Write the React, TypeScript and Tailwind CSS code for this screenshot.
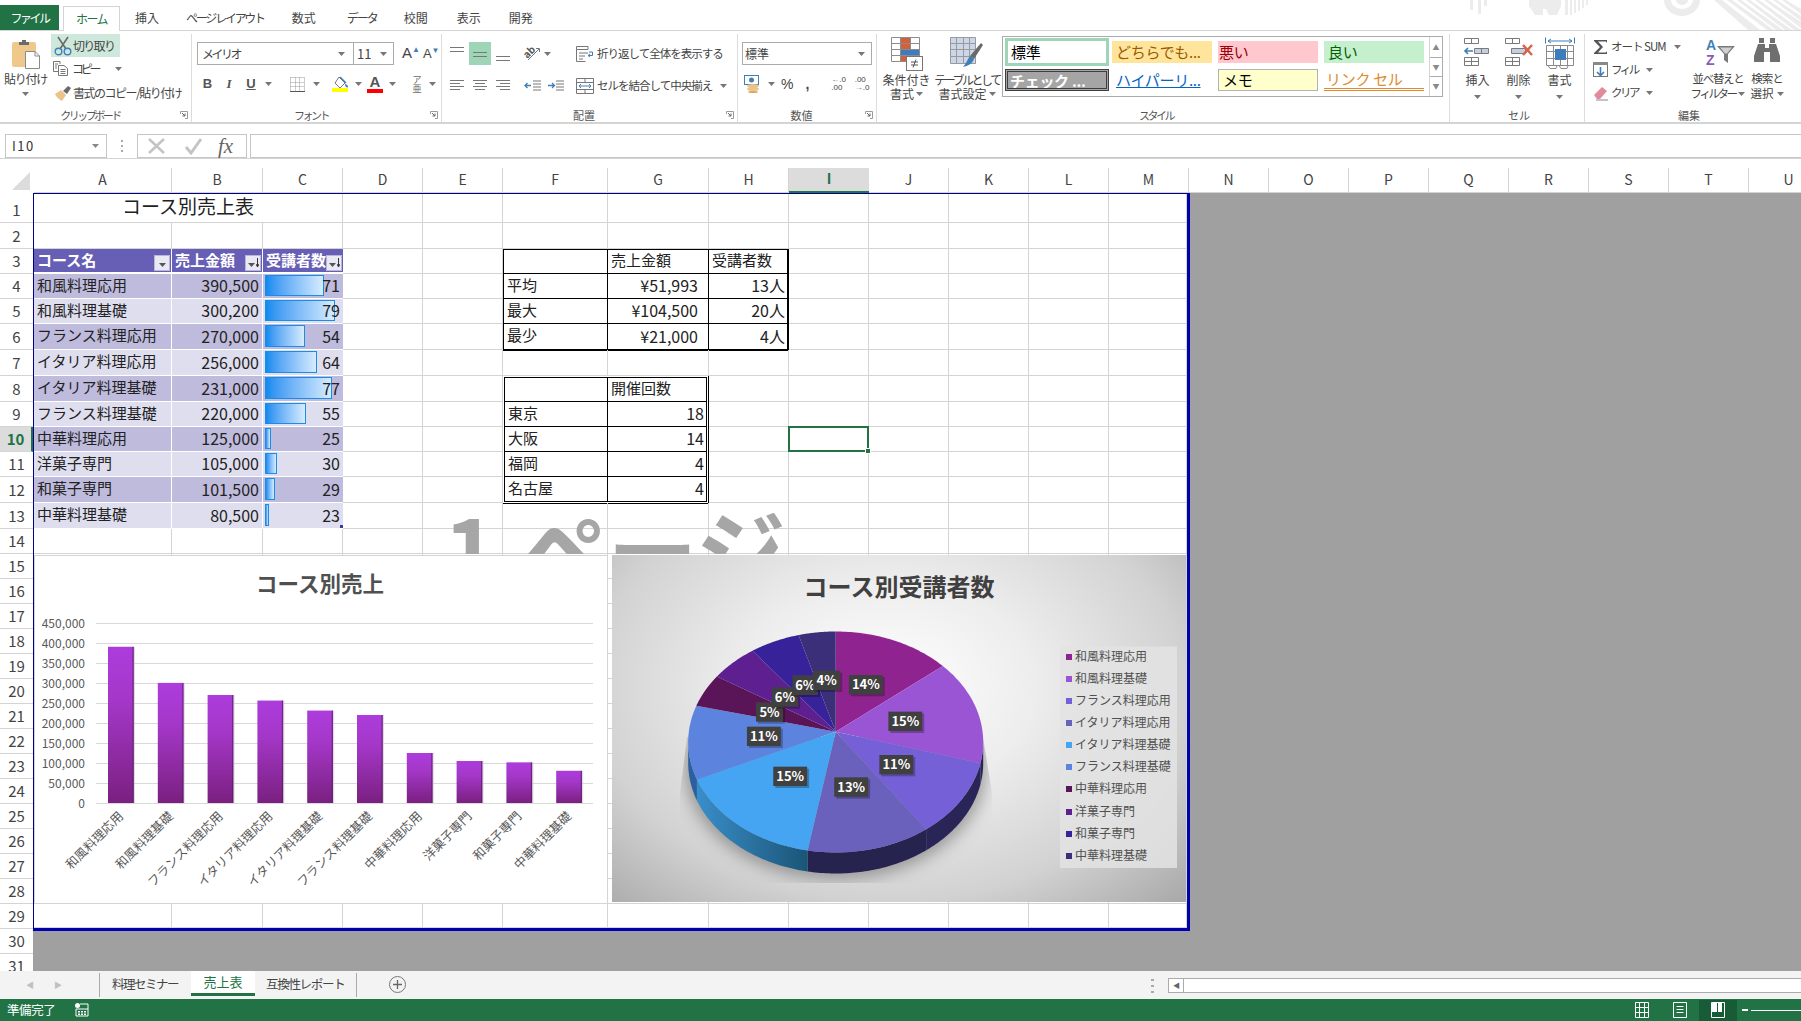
import React from 'react';

const Chev = ({ c = '#777' }: { c?: string }) => (
  <svg width="7" height="4" viewBox="0 0 7 4" className="shrink-0"><path d="M0 0h7L3.5 4z" fill={c} /></svg>
);
const Launcher = () => (
  <svg width="8" height="8" viewBox="0 0 8 8" className="shrink-0 mr-[3px]"><path d="M.5 3V.5H7.5V7.5H5" fill="none" stroke="#9a9a9a" /><path d="M2 2l3 3M5 2.5V5H2.5" fill="none" stroke="#666" /></svg>
);
const Sep = () => <div className="w-px self-stretch bg-[#dcdcdc] shrink-0" />;

const Lines = ({ rows }: { rows: [number, number, number][] }) => (
  <svg width="18" height="16" viewBox="0 0 18 16">
    {rows.map(([y, a, b], i) => <path key={i} d={`M${a} ${y + 0.5}H${b}`} stroke="#777" />)}
  </svg>
);

const Group = ({ w, label, launcher, children }: { w: string; label: React.ReactNode; launcher?: boolean; children: React.ReactNode }) => (
  <div className={`${w} h-[88px] flex flex-col border-r border-[#dcdcdc] shrink-0`}>
    <div className="h-[74px]">{children}</div>
    <div className="h-[14px] flex items-center">
      <div className="flex-1 text-center text-[11px] leading-none text-[#555]">{label}</div>
      {launcher ? <Launcher /> : <div className="w-[14px]" />}
    </div>
  </div>
);

const Paste = () => (
  <svg width="30" height="30" viewBox="0 0 30 30">
    <rect x="1" y="3" width="24" height="25" rx="2" fill="#efc98c" />
    <path d="M8 6V3h3V1h4v2h3v3z" fill="#6b6b6b" />
    <path d="M14.5 12.5H24l4.5 4.5V29.500H14.500z" fill="#fff" stroke="#8a8a8a" />
    <path d="M24 12.500V17h4.500" fill="none" stroke="#8a8a8a" />
  </svg>
);
const Scissors = () => (
  <svg width="18" height="20" viewBox="0 0 18 20">
    <path d="M4 1l8 12M14 1L6 13" stroke="#6a6a6a" strokeWidth="1.600" fill="none" />
    <circle cx="4.500" cy="15.500" r="3.300" fill="none" stroke="#3f7fb8" strokeWidth="1.400" />
    <circle cx="13.500" cy="15.500" r="3.300" fill="none" stroke="#3f7fb8" strokeWidth="1.400" />
  </svg>
);
const CopyIc = () => (
  <svg width="16" height="15" viewBox="0 0 16 15" fill="none" stroke="#777">
    <path d="M.5.500H7V3M.5.500V10.500H5" />
    <path d="M5.500 4.500H11l3.500 3v7H5.500z" fill="#fff" />
    <path d="M7.500 8.500h5M7.500 10.500h5M7.500 12.500h5" />
    <path d="M2 3h3M2 5h2M2 7h2" />
  </svg>
);
const Painter = () => (
  <svg width="18" height="16" viewBox="0 0 18 16">
    <path d="M1 9l6-4 5 5-4 6c-2-1-6-4-7-7z" fill="#eac48a" />
    <path d="M9 6l5-5 3 2-4 6z" fill="#6a6a6a" />
  </svg>
);
const Fill = () => (
  <svg width="18" height="16" viewBox="0 0 18 16">
    <path d="M7 1l6 6-5 5-5-5z" fill="#fff" stroke="#777" />
    <path d="M13 8c2 0 3 2 3 3s-3 1-3-3z" fill="#3f7fb8" />
    <path d="M8 1l6 6" stroke="#3f7fb8" strokeWidth="1.400" />
    <rect x="0" y="12" width="16" height="4" fill="#ffff00" />
  </svg>
);
const FontColor = () => (
  <div className="flex flex-col items-center">
    <span className="text-[15px] font-bold leading-[12px] text-[#555] font-['Liberation_Sans',sans-serif]">A</span>
    <div className="w-[16px] h-[4px] bg-[#ff0000] mt-[1px]" />
  </div>
);
const BorderIc = () => (
  <svg width="15" height="15" viewBox="0 0 15 15" fill="none" stroke="#9a9a9a" strokeDasharray="1 1">
    <path d="M.5.500h14M.5 5.500h14M.5 9.500h14M.5.500v14M5.500.500v14M9.500.500v14M14.500.500v14" />
    <path d="M0 14.500h15" stroke="#555" strokeDasharray="none" />
  </svg>
);
const Orient = () => (
  <svg width="20" height="18" viewBox="0 0 20 18">
    <text x="2" y="12" fontSize="10" fill="#555" fontWeight="700" transform="rotate(-45 6 9)">ab</text>
    <path d="M6 15L17 4M14 3.500h3.500V7" stroke="#777" fill="none" />
  </svg>
);
const Wrap = () => (
  <svg width="18" height="16" viewBox="0 0 18 16" fill="none" stroke="#777">
    <path d="M.5.500H12v3H.5zM.5 3.500v12h9" />
    <path d="M3 7h9M3 10h6M3 13h4" />
    <path d="M13 6h3.500v3.500h-4M14 8l-2 1.500 2 1.500" stroke="#3f7fb8" />
  </svg>
);
const Merge = () => (
  <svg width="18" height="16" viewBox="0 0 18 16" fill="none" stroke="#777">
    <path d="M.5.500h17v15H.5zM.5 4.500h17M.5 11.500h17M9 .5v4M9 11.500v4" />
    <path d="M3 8h12M5 6L3 8l2 2M13 6l2 2-2 2" stroke="#3f7fb8" />
  </svg>
);
const Indent = ({ flip }: { flip?: boolean }) => (
  <svg width="18" height="14" viewBox="0 0 18 14" fill="none">
    <path d="M9 2h8M9 5h8M9 8h8M9 11h8" stroke="#777" />
    {flip
      ? <path d="M1 6.500h6M5 4l2.500 2.500L5 9" stroke="#3f7fb8" strokeWidth="1.300" />
      : <path d="M7 6.500H1M3.500 4L1 6.500 3.500 9" stroke="#3f7fb8" strokeWidth="1.300" />}
  </svg>
);
const Acct = () => (
  <svg width="18" height="18" viewBox="0 0 18 18">
    <rect x=".5" y=".5" width="14" height="9" fill="#fff" stroke="#3f7fb8" />
    <circle cx="7.500" cy="5" r="2.500" fill="#3f7fb8" />
    <ellipse cx="9" cy="11" rx="6" ry="2" fill="#eac48a" />
    <ellipse cx="9" cy="14" rx="6" ry="2" fill="#eac48a" />
    <ellipse cx="9" cy="17" rx="5" ry="1" fill="#d7a860" />
  </svg>
);
const CondFmt = () => (
  <svg width="32" height="34" viewBox="0 0 32 34">
    <g fill="none" stroke="#8c8c8c">
      <path d="M.5.500h28v24H.5zM.5 6.500h28M.5 12.500h28M.5 18.500h28M9.500.5v24M19.500.5v24" />
    </g>
    <rect x="10" y="1" width="9" height="5" fill="#d2603c" />
    <rect x="10" y="7" width="9" height="5" fill="#d2603c" />
    <rect x="10" y="13" width="18" height="5" fill="#3f7cbd" />
    <rect x="10" y="19" width="9" height="5" fill="#d2603c" />
    <rect x="15.500" y="19.500" width="16" height="14" fill="#fff" stroke="#777" />
    <path d="M20 25h7M20 28h7M22 30.500l3-8" stroke="#555" fill="none" />
  </svg>
);
const TableFmt = () => (
  <svg width="34" height="34" viewBox="0 0 34 34">
    <rect x="1" y="1" width="25" height="26" fill="#cbd6e8" />
    <g fill="none" stroke="#9a9a9a">
      <path d="M.5.500h25v26H.5zM.5 6.500h25M.5 12.500h25M.5 19.500h25M6.500.5v26M13.500.5v26M19.500.5v26" />
    </g>
    <path d="M31 6l2 2-9 14-4-3z" fill="#6a6a6a" />
    <path d="M20 19l4 3c-2 5-6 7-11 8 3-3 4-7 7-11z" fill="#3f7fb8" />
  </svg>
);
const CellIns = ({ x }: { x?: boolean }) => (
  <svg width="30" height="28" viewBox="0 0 30 28" fill="none" stroke="#7a7a7a">
    <path d="M1.500.500h14v5h-14zM8.500.500v5" />
    <path d="M1.500 19.500h14v8h-14zM1.500 23.500h14M8.500 19.500v8" />
    {x ? (
      <>
        <path d="M7.500 10.500h14v5h-14z" fill="#c4cfdf" />
        <path d="M19 7l9 10M28 7l-9 10" stroke="#d9634a" strokeWidth="2.400" />
      </>
    ) : (
      <>
        <path d="M11.500 10.500h14v5h-14zM18.500 10.500v5" fill="#c4cfdf" />
        <path d="M10 13H2M5 10l-3 3 3 3" stroke="#3f7fb8" strokeWidth="1.600" />
      </>
    )}
  </svg>
);
const CellFmt = () => (
  <svg width="30" height="32" viewBox="0 0 30 32" fill="none" stroke="#8a8a8a">
    <path d="M3 4h24M6 2L3 4l3 2M24 2l3 2-3 2M.5.500v6M29.500.5v6" stroke="#3f7fb8" />
    <path d="M1.500 8.500h27v20h-27zM1.500 14.500h27M1.500 21.500h27M8.500 8.500v20M15.500 8.500v20M22.500 8.500v20" />
    <rect x="10" y="12" width="11" height="11" fill="#3f7cbd" stroke="none" />
    <path d="M3 28.500l2 3h6l1-3M14 28.500l2 3h6l1-3" />
  </svg>
);
const SortIc = () => (
  <svg width="34" height="28" viewBox="0 0 34 28">
    <text x="2" y="12" fontSize="14" fontWeight="700" fill="#3f7fb8" fontFamily="Liberation Sans">A</text>
    <text x="2" y="27" fontSize="14" fontWeight="700" fill="#8a5bb5" fontFamily="Liberation Sans">Z</text>
    <path d="M13 8h18l-7 8v9l-4-3v-6z" fill="#7a7a7a" />
    <path d="M16 9.500h12l-5 6H21z" fill="#d0d0d0" />
  </svg>
);
const Binocular = () => (
  <svg width="28" height="24" viewBox="0 0 28 24" fill="#6f6f6f">
    <path d="M6 0h5v5H6zM17 0h5v5h-5z" />
    <path d="M5 6h7v4h4V6h7l4 12v6H17V14h-6v10H1v-6z" />
  </svg>
);

const Tab = ({ t, cls }: { t: string; cls: string }) => (
  <span className={`text-[12px] leading-none text-[#444] ${cls}`}>{t}</span>
);

const TabRow = () => (
  <div className="relative h-[31px] shrink-0 border-b border-[#d4d4d4] flex items-end">
    <svg className="absolute right-0 top-0" width="334" height="30" viewBox="1467 0 334 30" fill="#ececec">
      <path d="M1470 0h3v10h-3zM1478 0h3v14h-3zM1484 0h3v6h-3z" />
      <path d="M1529 0h32v6l-4 9h-8l-3-6h-3v6h-8l-6-9zM1565 0h3v15h-3zM1570 0h2v15h-2zM1574 0h2v13h-2zM1578 0h2v11h-2zM1582 0h2v8h-2zM1586 0h2v5h-2z" />
      <path d="M1664 0a18 16 0 0 0 36 0h-7a11 9 0 0 1-22 0z" />
      <path d="M1676 0a6 5 0 0 0 12 0z" />
      <path d="M1714 0h8l38 30h-12zM1727 0h5l42 30h-7zM1737 0h4l42 30h-7zM1746 0h4l42 30h-7zM1755 0h4l42 30h-7zM1764 0h4l33 22v6zM1773 0h4l24 16v5zM1782 0h4l15 9v5z" />
    </svg>
    <div className="w-[59px] h-[25px] bg-[#217346] flex items-center justify-center text-white text-[12px] tracking-[-2.500px] leading-none">ファイル</div>
    <div className="ml-[4px] w-[57px] h-[25px] mb-[-1px] bg-white border border-b-0 border-[#d4d4d4] flex items-center justify-center text-[#217346] text-[12px] tracking-[-1.500px] leading-none">ホーム</div>
    <div className="h-[25px] flex items-center">
      <Tab t="挿入" cls="ml-[15px]" />
      <Tab t="ページ レイアウト" cls="ml-[27px] tracking-[-2.300px]" />
      <Tab t="数式" cls="ml-[28px]" />
      <Tab t="データ" cls="ml-[31px] tracking-[-2px]" />
      <Tab t="校閲" cls="ml-[27px]" />
      <Tab t="表示" cls="ml-[29px]" />
      <Tab t="開発" cls="ml-[28px]" />
    </div>
  </div>
);

const Ribbon = () => (
  <div className="h-[93px] shrink-0 border-b-2 border-[#d4d4d4] flex items-start pt-[3px] text-[#444] bg-white">
    {/* clipboard */}
    <Group w="w-[192px]" label={<span className="tracking-[-2.500px]">クリップボード</span>} launcher>
      <div className="flex">
        <div className="w-[51px] flex flex-col items-center pt-[5px]">
          <Paste />
          <span className="mt-[3px] text-[12px] leading-[14px] tracking-[-1.200px]">貼り付け</span>
          <div className="mt-[6px]"><Chev /></div>
        </div>
        <div className="flex flex-col">
          <div className="w-[69px] h-[23px] bg-[#cfe8dc] flex items-center pl-[3px] gap-[1px] text-[12px] tracking-[-1.700px]"><Scissors /><span>切り取り</span></div>
          <div className="h-[23px] flex items-center pl-[2px] gap-[3px] text-[12px] tracking-[-3.200px]"><CopyIc /><span>コピー</span><div className="ml-[14px]"><Chev /></div></div>
          <div className="h-[25px] flex items-center pl-[3px] gap-[1px] text-[12px] tracking-[-1.500px] whitespace-nowrap"><Painter /><span>書式のコピー/貼り付け</span></div>
        </div>
      </div>
    </Group>
    {/* font */}
    <Group w="w-[250px]" label={<span className="tracking-[-2.500px]">フォント</span>} launcher>
      <div className="pt-[8px] pl-[5px] flex flex-col">
        <div className="flex items-center h-[23px]">
          <div className="w-[157px] h-[23px] border border-[#ababab] flex items-center pl-[4px] pr-[8px] justify-between text-[12px] tracking-[-2.500px]"><span>メイリオ</span><Chev /></div>
          <div className="w-[40px] h-[23px] border border-l-0 border-[#ababab] flex items-center pl-[3px] pr-[6px] justify-between text-[13px]"><span>11</span><Chev /></div>
          <span className="ml-[8px] text-[15px] font-['Liberation_Sans',sans-serif]">A<span className="text-[8px] align-super text-[#3f7fb8]">▲</span></span>
          <span className="ml-[3px] text-[13px] font-['Liberation_Sans',sans-serif]">A<span className="text-[8px] align-super text-[#3f7fb8]">▼</span></span>
        </div>
        <div className="flex items-center h-[22px] mt-[8px] font-['Liberation_Sans',sans-serif]">
          <span className="w-[21px] text-center text-[13px] font-bold text-[#555]">B</span>
          <span className="w-[22px] text-center text-[13px] italic font-bold font-['Liberation_Serif',serif] text-[#555]">I</span>
          <span className="w-[22px] text-center text-[13px] font-bold underline text-[#555]">U</span>
          <div className="w-[13px] flex justify-center"><Chev /></div>
          <div className="ml-[4px]"><Sep /></div>
          <div className="w-[26px] h-[22px] ml-[4px] flex items-center justify-center"><BorderIc /></div>
          <div className="w-[12px] flex justify-center"><Chev /></div>
          <div className="ml-[5px] h-[22px]"><Sep /></div>
          <div className="w-[22px] ml-[2px] flex justify-center"><Fill /></div>
          <div className="w-[12px] flex justify-center"><Chev /></div>
          <div className="w-[22px] flex justify-center"><FontColor /></div>
          <div className="w-[12px] flex justify-center"><Chev /></div>
          <div className="ml-[4px] h-[22px]"><Sep /></div>
          <div className="w-[24px] ml-[2px] flex flex-col items-center text-[9px] leading-[9px] font-['Noto_Sans_CJK_JP',sans-serif] text-[#666]"><span>ア</span><span>亜</span></div>
          <Chev />
        </div>
      </div>
    </Group>
    {/* align */}
    <Group w="w-[296px]" label="配置" launcher>
      <div className="pt-[8px] pl-[5px] flex flex-col">
        <div className="flex items-center h-[23px]">
          <div className="w-[22px] h-[23px] flex items-center justify-center"><Lines rows={[[1, 1, 15], [5, 1, 15]]} /></div>
          <div className="w-[22px] h-[23px] flex items-center justify-center bg-[#9fd5b7]"><Lines rows={[[6, 2, 16], [10, 2, 16]]} /></div>
          <div className="w-[22px] h-[23px] flex items-center justify-center"><Lines rows={[[10, 3, 17], [14, 3, 17]]} /></div>
          <div className="ml-[4px]"><Sep /></div>
          <div className="w-[25px] ml-[1px] flex justify-center"><Orient /></div>
          <Chev />
          <div className="ml-[19px]"><Sep /></div>
          <div className="ml-[5px]"><Wrap /></div>
          <span className="ml-[3px] text-[11.500px] tracking-[-1px] leading-none whitespace-nowrap">折り返して全体を表示する</span>
        </div>
        <div className="flex items-center h-[22px] mt-[10px]">
          <div className="w-[22px] flex justify-center"><Lines rows={[[2, 1, 15], [5, 1, 11], [8, 1, 15], [11, 1, 11]]} /></div>
          <div className="w-[22px] flex justify-center"><Lines rows={[[2, 2, 16], [5, 4, 14], [8, 2, 16], [11, 4, 14]]} /></div>
          <div className="w-[22px] flex justify-center"><Lines rows={[[2, 3, 17], [5, 7, 17], [8, 3, 17], [11, 7, 17]]} /></div>
          <div className="ml-[4px] h-[22px]"><Sep /></div>
          <div className="ml-[6px]"><Indent /></div>
          <div className="ml-[5px]"><Indent flip /></div>
          <div className="ml-[5px] h-[22px]"><Sep /></div>
          <div className="ml-[5px]"><Merge /></div>
          <span className="ml-[3px] text-[11.500px] tracking-[-1px] leading-none whitespace-nowrap">セルを結合して中央揃え</span>
          <div className="ml-[8px]"><Chev /></div>
        </div>
      </div>
    </Group>
    {/* number */}
    <Group w="w-[139px]" label="数値" launcher>
      <div className="pt-[8px] pl-[4px] flex flex-col">
        <div className="w-[130px] h-[23px] border border-[#ababab] flex items-center justify-between pl-[2px] pr-[6px] text-[12px]"><span>標準</span><Chev /></div>
        <div className="flex items-center h-[22px] mt-[8px] pl-[1px]">
          <div className="ml-[1px]"><Acct /></div>
          <div className="ml-[6px]"><Chev /></div>
          <span className="ml-[6px] text-[14px] font-['Liberation_Sans',sans-serif]">%</span>
          <span className="ml-[12px] text-[14px] font-bold font-['Liberation_Sans',sans-serif]">,</span>
          <div className="ml-[12px] h-[22px]"><Sep /></div>
          <div className="ml-[9px] w-[22px] flex flex-col text-[8px] leading-[8px] font-['Liberation_Sans',sans-serif]"><span><span className="text-[#3f7fb8]">←</span>.0</span><span>.00</span></div>
          <div className="ml-[2px] w-[22px] flex flex-col text-[8px] leading-[8px] font-['Liberation_Sans',sans-serif]"><span>.00</span><span><span className="text-[#3f7fb8]">→</span>.0</span></div>
        </div>
      </div>
    </Group>
    {/* styles */}
    <Group w="w-[573px]" label={<span className="tracking-[-2.500px]">スタイル</span>}>
      <div className="flex">
        <div className="w-[55px] ml-[2px] flex flex-col items-center pt-[3px] text-[12px] leading-[14px]">
          <CondFmt />
          <span className="mt-[2px]">条件付き</span>
          <span className="flex items-center gap-[2px]">書式<Chev /></span>
        </div>
        <div className="w-[66px] flex flex-col items-center pt-[3px] text-[12px] leading-[14px]">
          <TableFmt />
          <span className="mt-[2px] tracking-[-2.500px] whitespace-nowrap">テーブルとして</span>
          <span className="flex items-center gap-[2px]">書式設定<Chev /></span>
        </div>
        <div className="ml-[2px] mt-[2px] w-[441px] h-[61px] border border-[#ababab] flex">
          <div className="flex-1 pl-[2px] pt-px grid grid-cols-[107px_106px_106px_100px] grid-rows-[31px_22px] text-[15px] tracking-[-0.300px] leading-none">
            <div className="w-[104px] h-[28px] border-[3px] border-[#9fd5b7] flex items-center pl-[3px] pb-[2px] text-black">標準</div>
            <div className="w-[100px] h-[22px] mt-[3px] bg-[#ffe59c] text-[#9c5700] flex items-center pl-[4px] pb-[2px]">どちらでも...</div>
            <div className="w-[100px] h-[22px] mt-[3px] bg-[#ffc7ce] text-[#9c0006] flex items-center pl-[1px] pb-[2px]">悪い</div>
            <div className="w-[100px] h-[22px] mt-[3px] bg-[#c6efce] text-[#006100] flex items-center pl-[4px] pb-[2px]">良い</div>
            <div className="w-[104px] h-[22px] bg-[#a5a5a5] border-[3px] border-double border-[#3f3f3f] text-white font-bold flex items-center pl-[2px] overflow-hidden">チェック ...</div>
            <div className="w-[100px] h-[22px] text-[#0563c1] underline flex items-center pl-[4px] pb-[2px]">ハイパーリ...</div>
            <div className="w-[100px] h-[22px] bg-[#ffffcc] border border-[#b2b2b2] text-black flex items-center pl-[4px] pb-[2px]">メモ</div>
            <div className="w-[100px] h-[22px] text-[#e08a2e] border-b-[3px] border-double border-[#e08a2e] flex items-center pl-[2px]">リンク セル</div>
          </div>
          <div className="w-[13px] border-l border-[#d4d4d4] flex flex-col text-[#8a8a8a] text-[7px] leading-none">
            <div className="h-[20px] flex items-center justify-center">▲</div>
            <div className="h-[19px] border-t border-[#ababab] flex items-center justify-center">▼</div>
            <div className="flex-1 border-t border-[#ababab] flex items-center justify-center">▼</div>
          </div>
        </div>
      </div>
    </Group>
    {/* cells */}
    <Group w="w-[135px]" label={<span className="ml-[18px]">セル</span>}>
      <div className="flex pl-[7px] pt-[4px] text-[12px] leading-[15px]">
        <div className="w-[41px] flex flex-col items-center"><div className="h-[30px]"><CellIns /></div><span className="mt-[4px]">挿入</span><div className="mt-[8px]"><Chev /></div></div>
        <div className="w-[41px] flex flex-col items-center"><div className="h-[30px]"><CellIns x /></div><span className="mt-[4px]">削除</span><div className="mt-[8px]"><Chev /></div></div>
        <div className="w-[41px] flex flex-col items-center"><div className="h-[30px] -mt-[1px]"><CellFmt /></div><span className="mt-[5px]">書式</span><div className="mt-[8px]"><Chev /></div></div>
      </div>
    </Group>
    {/* edit */}
    <div className="flex-1 h-[88px] flex flex-col">
      <div className="h-[74px] flex pl-[8px]">
        <div className="w-[96px] flex flex-col pt-[2px] text-[11.500px] leading-none shrink-0">
          <div className="h-[22px] flex items-center whitespace-nowrap"><svg width="16" height="16" viewBox="0 0 16 16"><path d="M1 1h13v3l-1-1.500H5L10 8l-5 5.500h8L14 12v3H1v-1l6-6-6-6z" fill="#555" /></svg><span className="ml-[2px] tracking-[-1px]">オート SUM</span><div className="ml-[8px]"><Chev /></div></div>
          <div className="h-[24px] flex items-center"><svg width="16" height="16" viewBox="0 0 16 16"><rect x=".5" y=".5" width="14" height="14" fill="#fff" stroke="#777" /><rect x="0" y="0" width="15" height="3" fill="#888" /><path d="M7.500 5v8M4 10l3.500 3.500L11 10" stroke="#3f7fb8" strokeWidth="1.600" fill="none" /></svg><span className="ml-[2px] tracking-[-2.500px]">フィル</span><div className="ml-[8px]"><Chev /></div></div>
          <div className="h-[22px] flex items-center"><svg width="16" height="15" viewBox="0 0 16 15"><path d="M1 9l8-8 5 4-7 8H4z" fill="#e28a9c" /><path d="M3 14h12" stroke="#888" /></svg><span className="ml-[2px] tracking-[-2.500px]">クリア</span><div className="ml-[8px]"><Chev /></div></div>
        </div>
        <div className="w-[58px] flex flex-col items-center pt-[4px] text-[11.500px] leading-[15px]">
          <div className="h-[30px] ml-[6px]"><SortIc /></div>
          <span className="mt-[3px] tracking-[-1.300px] whitespace-nowrap">並べ替えと</span>
          <span className="flex items-center gap-[3px] tracking-[-2.500px] whitespace-nowrap">フィルター<Chev /></span>
        </div>
        <div className="w-[40px] flex flex-col items-center pt-[4px] text-[11.500px] leading-[15px]">
          <div className="h-[30px]"><Binocular /></div>
          <span className="mt-[3px] tracking-[-1px] whitespace-nowrap">検索と</span>
          <span className="flex items-center gap-[3px] whitespace-nowrap">選択<Chev /></span>
        </div>
      </div>
      <div className="h-[14px] flex items-center text-[11px] leading-none text-[#555]"><span className="ml-[93px]">編集</span></div>
    </div>
  </div>
);

const FormulaBar = () => (
  <div className="h-[35px] shrink-0 border-b border-[#d4d4d4] flex items-end pl-[5px] bg-white">
    <div className="w-[102px] h-[24px] border border-[#c6c6c6] flex items-center justify-between pl-[6px] pr-[7px] text-[13px] tracking-[1.500px] text-[#333]"><span>I10</span><Chev c="#888" /></div>
    <div className="w-[30px] h-[24px] flex items-center justify-center"><svg width="3" height="14" viewBox="0 0 3 14" fill="#aaa"><rect y="1" width="2" height="2" /><rect y="6" width="2" height="2" /><rect y="11" width="2" height="2" /></svg></div>
    <div className="w-[110px] h-[24px] border border-[#c6c6c6] flex items-center">
      <svg className="ml-[9px]" width="19" height="18" viewBox="0 0 19 18"><path d="M2 2l15 14M17 2L2 16" stroke="#c4c4c4" strokeWidth="2.600" /></svg>
      <svg className="ml-[18px]" width="19" height="18" viewBox="0 0 19 18"><path d="M2 10l5 6L17 2" fill="none" stroke="#c4c4c4" strokeWidth="3" /></svg>
      <span className="ml-[15px] text-[21px] italic leading-none text-[#666] font-['Liberation_Serif',serif]">fx</span>
    </div>
    <div className="ml-[3px] flex-1 h-[24px] border border-r-0 border-[#c6c6c6]" />
  </div>
);

const colHead: [string, string][] = [
  ['A', 'w-[138px]'], ['B', 'w-[91px]'], ['C', 'w-[80px]'], ['D', 'w-[80px]'], ['E', 'w-[80px]'], ['F', 'w-[105px]'], ['G', 'w-[101px]'],
  ['H', 'w-[80px]'], ['J', 'w-[80px]'], ['K', 'w-[80px]'], ['L', 'w-[80px]'], ['M', 'w-[80px]'], ['N', 'w-[80px]'], ['O', 'w-[80px]'],
  ['P', 'w-[80px]'], ['Q', 'w-[80px]'], ['R', 'w-[80px]'], ['S', 'w-[80px]'], ['T', 'w-[80px]'], ['U', 'w-[80px]'],
];

const ColHeader = () => (
  <div className="h-[34px] shrink-0 flex items-end overflow-hidden bg-white">
    <div className="w-[34px] h-[25px] shrink-0 flex justify-end items-center pr-[4px]">
      <svg width="18" height="18" viewBox="0 0 18 18"><path d="M18 0v18H0z" fill="#dcdcdc" /></svg>
    </div>
    {colHead.map(([c, w]) => (
      <React.Fragment key={c}>
        {c === 'J' && (
          <div className="w-[80px] h-[25px] shrink-0 bg-[#dcdcdc] border-b-2 border-[#217346] flex items-center justify-center text-[14px] font-bold text-[#217346] pb-[2px]">I</div>
        )}
        <div className={`${w} h-[25px] shrink-0 border-r border-b border-[#d4d4d4] flex items-center justify-center text-[14px] text-[#444] pb-[2px]`}>{c}</div>
      </React.Fragment>
    ))}
  </div>
);

const RowHeader = () => (
  <div className="w-[33px] shrink-0 grid grid-rows-[1px_29px_26px_25px_25px_25px_26px_26px_26px_25px_25px_25px_26px_26px_25px_repeat(17,25px)] bg-white h-[778px] overflow-hidden">
    <div />
    {Array.from({ length: 31 }, (_, i) => i + 1).map((n) =>
      n === 10 ? (
        <div key={n} className="bg-[#dcdcdc] border-r-2 border-b border-[#217346] border-b-[#d4d4d4] flex items-center justify-center text-[15px] font-bold text-[#217346] leading-none pb-[1px]">{n}</div>
      ) : (
        <div key={n} className={`border-b border-[#d4d4d4] flex items-center justify-center text-[15px] text-[#444] leading-none ${n === 1 ? 'pt-[3px]' : 'pb-[1px]'}`}>{n}</div>
      ),
    )}
  </div>
);

const course: [string, string, number, number, string][] = [
  ['和風料理応用', '390,500', 71, 59.4, 'bg-[#bfbbdd]'],
  ['和風料理基礎', '300,200', 79, 69.7, 'bg-[#dfdeef]'],
  ['フランス料理応用', '270,000', 54, 39.7, 'bg-[#bfbbdd]'],
  ['イタリア料理応用', '256,000', 64, 51.5, 'bg-[#dfdeef]'],
  ['イタリア料理基礎', '231,000', 77, 67.4, 'bg-[#bfbbdd]'],
  ['フランス料理基礎', '220,000', 55, 40.5, 'bg-[#dfdeef]'],
  ['中華料理応用', '125,000', 25, 5.7, 'bg-[#bfbbdd]'],
  ['洋菓子専門', '105,000', 30, 11.6, 'bg-[#dfdeef]'],
  ['和菓子専門', '101,500', 29, 10.4, 'bg-[#bfbbdd]'],
  ['中華料理基礎', '80,500', 23, 3.7, 'bg-[#dfdeef]'],
];

const FilterBtn = ({ sort }: { sort?: boolean }) => (
  <div className="absolute right-px bottom-px w-[16px] h-[16px] bg-[#e9e9f4] border border-[#b9b6d8] flex items-end justify-center pb-[3px] gap-[1px]">
    <Chev c="#555" />
    {sort && <svg width="3" height="9" viewBox="0 0 3 9"><path d="M1.500 0v8M0 6l1.500 3L3 6" stroke="#333" fill="none" /></svg>}
  </div>
);

const CourseTable = () => (
  <div className="col-start-1 col-end-4 row-start-3 row-end-14 grid grid-cols-subgrid grid-rows-subgrid text-[15px] text-[#222]">
    <div className="relative bg-[#675eb5] border-r border-b-2 border-white flex items-center pl-[3px] text-white font-bold">コース名<FilterBtn /></div>
    <div className="relative bg-[#675eb5] border-r border-b-2 border-white flex items-center pl-[3px] text-white font-bold">売上金額<FilterBtn sort /></div>
    <div className="relative bg-[#675eb5] border-b-2 border-white flex items-center pl-[3px] text-white font-bold">受講者数<FilterBtn sort /></div>
    {course.map(([n, s, c, w, bg]) => (
      <React.Fragment key={n}>
        <div className={`${bg} border-r border-b border-white flex items-center pl-[3px] pb-[2px]`}>{n}</div>
        <div className={`${bg} border-r border-b border-white flex items-center justify-end pr-[3px] text-[16px] pb-[2px]`}>{s}</div>
        <div className={`${bg} relative border-b border-white flex items-center justify-end pr-[3px] text-[16px] pb-[2px]`}>
          <div className="absolute left-[2px] top-px bottom-[2px] border border-[#1a8ee6] bg-linear-to-r from-[#0a8bef] to-[#d6ecfd]" style={{ width: w }} />
          <span className="relative">{c}</span>
          {c === 23 && <div className="absolute right-0 bottom-0 w-[3px] h-[3px] bg-[#3a3a9a]" />}
        </div>
      </React.Fragment>
    ))}
  </div>
);

const t1: string[][] = [
  ['', '売上金額', '受講者数'],
  ['平均', '¥51,993', '13人'],
  ['最大', '¥104,500', '20人'],
  ['最少', '¥21,000', '4人'],
];
const t2: string[][] = [['', '開催回数'], ['東京', '18'], ['大阪', '14'], ['福岡', '4'], ['名古屋', '4']];

const Table1 = () => (
  <div className="col-start-6 col-end-9 row-start-3 row-end-7 -ml-px -mt-px -mb-px grid grid-cols-subgrid grid-rows-subgrid border-2 border-black bg-white text-[15px] text-[#222]">
    {t1.map((r, i) =>
      r.map((v, j) => (
        <div
          key={`${i}${j}`}
          className={`flex items-center pb-[2px] ${i < 3 ? 'border-b' : ''} ${j < 2 ? 'border-r' : ''} border-black ${i === 0 || j === 0 ? 'pl-[3px]' : j === 1 ? 'justify-end pr-[10px] text-[16px]' : 'justify-end pr-[2px] text-[16px]'}`}
        >
          {v}
        </div>
      )),
    )}
  </div>
);
const Table2 = () => (
  <div className="col-start-6 col-end-8 row-start-8 row-end-13 -ml-px -mt-px -mb-px grid grid-cols-subgrid grid-rows-subgrid border-[3px] border-double border-black bg-white text-[15px] text-[#222]">
    {t2.map((r, i) =>
      r.map((v, j) => (
        <div
          key={`${i}${j}`}
          className={`flex items-center pb-[2px] ${i < 4 ? 'border-b' : ''} ${j < 1 ? 'border-r' : ''} border-black ${i === 0 || j === 0 ? 'pl-[3px]' : 'justify-end pr-[2px] text-[16px]'}`}
        >
          {v}
        </div>
      )),
    )}
  </div>
);

const barVals = [390500, 300200, 270000, 256000, 231000, 220000, 125000, 105000, 101500, 80500];
const names = ['和風料理応用', '和風料理基礎', 'フランス料理応用', 'イタリア料理応用', 'イタリア料理基礎', 'フランス料理基礎', '中華料理応用', '洋菓子専門', '和菓子専門', '中華料理基礎'];

const BarChart = () => (
  <div className="absolute left-0 top-[361px] w-[574px] h-[349px] bg-white border border-[#d4d4d4]">
    <svg width="572" height="347" viewBox="35 556 572 347">
      <defs>
        <linearGradient id="bar" x1="0" y1="0" x2="0" y2="1">
          <stop offset="0" stopColor="#ad3cdc" />
          <stop offset="0.35" stopColor="#a437c8" />
          <stop offset="1" stopColor="#7a2080" />
        </linearGradient>
      </defs>
      <text x="320" y="592" textAnchor="middle" fontSize="21.500" fontWeight="700" fill="#505050">コース別売上</text>
      {Array.from({ length: 10 }, (_, i) => i).map((i) => {
        const y = 803.5 - i * 20;
        return (
          <g key={i}>
            <path d={`M96 ${y}H593`} stroke="#d9d9d9" />
            <text x="85" y={y + 4.5} textAnchor="end" fontSize="12" fill="#595959">{i === 0 ? '0' : (i * 50000).toLocaleString('en-US')}</text>
          </g>
        );
      })}
      {barVals.map((v, i) => {
        const x = 108 + i * 49.8;
        const h = (v / 50000) * 20;
        return (
          <g key={i}>
            <rect x={x + 1} y={803 - h} width="26" height={h} fill="#cfcfcf" opacity="0.7" />
            <rect x={x} y={803 - h} width="25.700" height={h} fill="url(#bar)" />
            <rect x={x + 24.5} y={803 - h} width="1.200" height={h} fill="#5a1a66" opacity="0.7" />
            <text x={x + 16} y="817" textAnchor="end" fontSize="12.500" fill="#595959" transform={`rotate(-45 ${x + 16} 817)`}>{names[i]}</text>
          </g>
        );
      })}
    </svg>
  </div>
);

const cx = 835.7, cy = 742, rx = 147.5, ry = 110.5, ax = 835.7, ay = 731.7, depth = 21;
const conv = (zx: number, zy: number) => [610 + zx / 2.658, 550 + zy / 3];
const raw: [number, number][] = [[600, 245], [885, 348], [988, 640], [838, 835], [525, 903], [232, 688], [232, 468], [288, 382], [385, 310], [502, 258]];
const angles: number[] = (() => {
  const out: number[] = [];
  raw.forEach(([a, b]) => {
    const [x, y] = conv(a, b);
    let t = Math.atan2((y - cy) / ry, (x - cx) / rx);
    while (out.length && t < out[out.length - 1]) t += Math.PI * 2;
    out.push(t);
  });
  out.push(out[0] + Math.PI * 2);
  return out;
})();
const arc = (a: number, b: number, dy = 0) => {
  const r: string[] = [];
  const n = 48;
  for (let i = 0; i <= n; i++) {
    const t = a + ((b - a) * i) / n;
    r.push(`${(cx + rx * Math.cos(t)).toFixed(2)} ${(cy + dy + ry * Math.sin(t)).toFixed(2)}`);
  }
  return r;
};
const sliceColors = ['#8f2490', '#9a55d4', '#7560d8', '#6961bb', '#45a5f2', '#5c84df', '#5a1559', '#5e2090', '#37229a', '#3a2f78'];
const sideFill = ['', '', '#2a2557', '#26234f', 'url(#blueSide)', '#2c5f9e'];
const legendNames = ['和風料理応用', '和風料理基礎', 'フランス料理応用', 'イタリア料理応用', 'イタリア料理基礎', 'フランス料理基礎', '中華料理応用', '洋菓子専門', '和菓子専門', '中華料理基礎'];
const legendY = [657, 679, 701, 723, 745, 767, 789, 812, 834, 856];
const labels: [string, number, number, number, number][] = [
  ['14%', 635, 375, 725, 433], ['15%', 740, 485, 830, 543], ['11%', 716, 615, 806, 673], ['13%', 596, 682, 686, 740], ['15%', 434, 650, 524, 708],
  ['11%', 364, 530, 454, 588], ['5%', 388, 457, 460, 515], ['6%', 430, 412, 500, 470], ['6%', 485, 376, 553, 435], ['4%', 540, 362, 612, 420],
];

const PieChart = () => (
  <div className="absolute left-[578px] top-[361px] w-[574px] h-[347px] bg-[radial-gradient(ellipse_at_48%_38%,#ffffff_0%,#ededed_35%,#d2d2d2_70%,#a8a8a8_100%)]">
    <svg width="574" height="347" viewBox="612 555 574 347">
      <defs>
        <linearGradient id="blueSide" gradientUnits="userSpaceOnUse" x1="695" y1="0" x2="808" y2="0">
          <stop offset="0" stopColor="#3a8fcb" />
          <stop offset="1" stopColor="#1a5577" />
        </linearGradient>
        <filter id="blur" x="-20%" y="-20%" width="140%" height="140%"><feGaussianBlur stdDeviation="8" /></filter>
        <clipPath id="shadowClip"><path d="M687 737L680 793V883H992V793L983 737z" /></clipPath>
      </defs>
      <text x="899" y="596" textAnchor="middle" fontSize="24" fontWeight="700" fill="#404040">コース別受講者数</text>
      <g clipPath="url(#shadowClip)">
        <ellipse cx={cx} cy={cy + 25} rx={rx + 4} ry={ry + 2} fill="#555" opacity="0.5" filter="url(#blur)" />
      </g>
      {angles.slice(0, 10).map((a, i) => {
        const b = angles[i + 1];
        const lo = Math.max(a, 0);
        const hi = Math.min(b, Math.PI);
        if (hi <= lo) return null;
        const top = arc(lo, hi);
        const bot = arc(lo, hi, depth).reverse();
        return <path key={i} d={`M${[...top, ...bot].join('L')}Z`} fill={sideFill[i] || '#2a2557'} />;
      })}
      {angles.slice(0, 10).map((a, i) => (
        <path key={i} d={`M${ax} ${ay}L${arc(a, angles[i + 1]).join('L')}Z`} fill={sliceColors[i]} />
      ))}
      {labels.map(([t, x1, y1, x2, y2], i) => {
        const [a, b] = conv(x1, y1);
        const [c, d] = conv(x2, y2);
        return (
          <g key={i}>
            <rect x={a + 2} y={b + 2} width={c - a} height={d - b} fill="#000" opacity="0.25" />
            <rect x={a} y={b} width={c - a} height={d - b} fill="#404040" />
            <text x={(a + c) / 2} y={(b + d) / 2 + 4.5} textAnchor="middle" fontSize="13" fontWeight="700" fill="#fff">{t}</text>
          </g>
        );
      })}
      <rect x="1060" y="646.500" width="117" height="221.500" fill="#e3e3e3" opacity="0.85" />
      {legendNames.map((n, i) => (
        <g key={n}>
          <rect x="1066" y={legendY[i] - 3} width="6" height="6" fill={sliceColors[i]} />
          <text x="1075" y={legendY[i] + 4} fontSize="12" fill="#505050">{n}</text>
        </g>
      ))}
    </svg>
  </div>
);

const Sheet = () => (
  <div className="flex h-[778px] shrink-0 bg-[#a0a0a0] overflow-hidden">
    <RowHeader />
    <div className="relative w-[1157px] h-[738px] bg-white border-l border-t border-l-[#00008f] border-t-[#00008f] border-r-[3px] border-b-[3px] border-r-[#0000b0] border-b-[#0000b0]">
      <div className="grid grid-cols-[138px_91px_80px_80px_80px_105px_101px_80px_80px_80px_80px_80px_78px] grid-rows-[29px_26px_25px_25px_25px_26px_26px_26px_25px_25px_25px_26px_26px_25px_repeat(14,25px)_24px]">
        <div className="col-start-1 col-end-4 row-start-1 flex items-center justify-center text-[19px] text-[#222] border-b border-[#d4d4d4] border-r pb-[4px]">コース別売上表</div>
        <CourseTable />
        <Table1 />
        <Table2 />
        <div className="relative col-start-9 row-start-10 -ml-px -mt-px border-2 border-[#217346]">
          <div className="absolute -right-[4px] -bottom-[4px] w-[6px] h-[6px] bg-[#217346] border border-white" />
        </div>
        {Array.from({ length: 318 }, (_, i) => (
          <div key={i} className="border-r border-b border-[#d4d4d4]" />
        ))}
      </div>
      <div className="absolute left-[410px] top-[300px] w-[400px] h-[60px] overflow-hidden">
        <div className="whitespace-nowrap text-[90px] leading-[90px] font-bold text-[#a6a6a6] mt-[8px]">1 ページ</div>
      </div>
      <BarChart />
      <PieChart />
    </div>
  </div>
);

const SheetTabs = () => (
  <div className="h-[28px] shrink-0 bg-[#f3f3f3] flex items-start text-[#444] text-[12.500px]">
    <div className="w-[100px] h-[24px] flex items-center border-r border-[#ababab] mt-[2px] pl-[26px] text-[8px] text-[#c0c0c0]">
      <span>◀</span><span className="ml-[20px]">▶</span>
    </div>
    <span className="ml-[12px] mt-[4px] tracking-[-1.500px]">料理セミナー</span>
    <div className="ml-[13px] w-[64px] h-[25px] bg-white border-b-[3px] border-[#217346] text-[#217346] flex items-center justify-center text-[13px]">売上表</div>
    <span className="ml-[11px] mt-[4px] tracking-[-1.300px] whitespace-nowrap">互換性レポート</span>
    <div className="ml-[12px] mt-[2px] w-px h-[24px] bg-[#ababab]" />
    <div className="ml-[32px] mt-[5px] w-[17px] h-[17px] rounded-full border border-[#777] flex items-center justify-center">
      <svg width="9" height="9" viewBox="0 0 9 9"><path d="M4.500 0v9M0 4.500h9" stroke="#666" strokeWidth="1.300" /></svg>
    </div>
    <div className="ml-[745px] mt-[8px] w-[3px] h-[14px] flex flex-col justify-between">
      <div className="h-[2px] bg-[#aaa]" /><div className="h-[2px] bg-[#aaa]" /><div className="h-[2px] bg-[#aaa]" />
    </div>
    <div className="ml-[14px] mt-[7px] flex-1 h-[15px] bg-white border border-r-0 border-[#ababab] flex">
      <div className="w-[15px] border-r border-[#ababab] flex items-center justify-center text-[7px] text-[#666]">◀</div>
    </div>
  </div>
);

const StatusBar = () => (
  <div className="h-[22px] shrink-0 bg-[#217346] flex items-center text-white text-[12.500px] pl-[7px] tracking-[-0.400px]">
    <span>準備完了</span>
    <svg className="ml-[20px]" width="14" height="14" viewBox="0 0 14 14" fill="#fff">
      <circle cx="2.500" cy="2.500" r="2.500" />
      <path d="M5 1h8v12H1V6h12" fill="none" stroke="#fff" />
      <path d="M3 8h2v1.500H3zM6 8h2v1.500H6zM9 8h2v1.500H9zM3 10.500h2V12H3zM6 10.500h2V12H6zM9 10.500h2V12H9z" />
    </svg>
    <div className="ml-auto flex items-center h-[22px]">
      <svg width="14" height="16" viewBox="0 0 14 16" fill="none" stroke="#fff"><path d="M.5.500h13v15H.5zM.5 5.500h13M.5 10.500h13M4.500.5v15M9.500.5v15" /></svg>
      <svg className="ml-[24px]" width="14" height="16" viewBox="0 0 14 16" fill="none" stroke="#fff"><path d="M.5.500h13v15H.5zM3.500 4.500h7M3.500 7.500h7M3.500 10.500h7" /></svg>
      <div className="ml-[12px] w-[38px] h-[21px] bg-[#185c37] flex items-center justify-center">
        <svg width="14" height="16" viewBox="0 0 14 16"><path d="M.5.500h13v15H.5z" fill="none" stroke="#fff" /><rect x="1" y="1" width="5" height="9" fill="#fff" /><rect x="7" y="1" width="4" height="9" fill="#fff" /></svg>
      </div>
      <div className="ml-[5px] w-[6px] h-[2px] bg-white" />
      <div className="ml-[3px] w-[50px] h-px bg-white" />
    </div>
  </div>
);

export default function App() {
  return (
    <div className="w-[1801px] h-[1021px] overflow-hidden bg-white flex flex-col font-['Noto_Sans_CJK_JP','Noto_Sans',sans-serif]">
      <TabRow />
      <Ribbon />
      <FormulaBar />
      <ColHeader />
      <Sheet />
      <SheetTabs />
      <StatusBar />
    </div>
  );
}
